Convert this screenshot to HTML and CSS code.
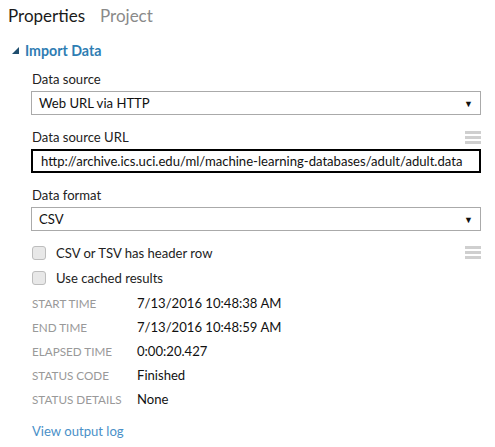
FILE: index.html
```html
<!DOCTYPE html>
<html>
<head>
<meta charset="utf-8">
<link rel="stylesheet" href="styles.css">
</head>
<body>
<div class="tabs">
  <span class="tab active">Properties</span>
  <span class="tab">Project</span>
</div>
<div class="section-head">
  <svg class="tri" width="7" height="7" viewBox="0 0 7 7"><polygon points="7,0 7,7 0,7" fill="#1f4e6e"/></svg>
  <span>Import Data</span>
</div>
<div class="panel">
  <div class="label-row"><span>Data source</span></div>
  <div class="select"><span>Web URL via HTTP</span><span class="arrow">▼</span></div>
  <div class="label-row"><span>Data source URL</span><span class="menu"><i></i><i></i><i></i></span></div>
  <div class="input">http://archive.ics.uci.edu/ml/machine-learning-databases/adult/adult.data</div>
  <div class="label-row"><span>Data format</span></div>
  <div class="select"><span>CSV</span><span class="arrow">▼</span></div>
  <div class="check-row first"><span class="box"></span><span class="ctext">CSV or TSV has header row</span><span class="menu"><i></i><i></i><i></i></span></div>
  <div class="check-row"><span class="box"></span><span class="ctext">Use cached results</span></div>
  <div class="stats">
    <div class="stat"><span class="k">START TIME</span><span class="v">7/13/2016 10:48:38 AM</span></div>
    <div class="stat"><span class="k">END TIME</span><span class="v">7/13/2016 10:48:59 AM</span></div>
    <div class="stat"><span class="k">ELAPSED TIME</span><span class="v">0:00:20.427</span></div>
    <div class="stat"><span class="k">STATUS CODE</span><span class="v">Finished</span></div>
    <div class="stat"><span class="k">STATUS DETAILS</span><span class="v">None</span></div>
  </div>
  <a class="log" href="#">View output log</a>
</div>
</body>
</html>
```
FILE: styles.css
```css
html, body {
  margin: 0;
  padding: 0;
  background: #fff;
}
body {
  font-family: "Lato", "Open Sans", sans-serif;
  font-size: 13.1px;
  color: #222;
  width: 495px;
  height: 447px;
  overflow: hidden;
}
.tabs {
  display: flex;
  gap: 15px;
  padding-left: 8px;
  height: 30px;
  align-items: center;
}
.tab {
  font-size: 17px;
  color: #8a8a8a;
}
.tab.active {
  color: #1a1a1a;
}
.section-head {
  display: flex;
  align-items: center;
  gap: 6px;
  padding-left: 12px;
  height: 20px;
  margin-top: 10px;
  color: #2e7db3;
  font-size: 14.2px;
  font-weight: 700;
}
.tri {
  display: block;
}
.panel {
  padding-left: 31px;
  padding-right: 14px;
}
.label-row {
  display: flex;
  justify-content: space-between;
  align-items: center;
  height: 24px;
  padding-left: 1px;
  margin-top: 10px;
}
.label-row:first-child {
  margin-top: 7px;
}
.select {
  display: flex;
  justify-content: space-between;
  align-items: center;
  height: 24px;
  box-sizing: border-box;
  border: 1px solid #aaa;
  padding: 0 7px 0 7px;
  color: #111;
}
.arrow {
  font-size: 9px;
  color: #111;
}
.menu {
  display: flex;
  flex-direction: column;
  gap: 2px;
  width: 16px;
}
.menu i {
  display: block;
  height: 3px;
  background: #cfcfcf;
}
.input {
  height: 24px;
  box-sizing: border-box;
  border: 2px solid #000;
  padding: 0 0 0 8px;
  display: flex;
  align-items: center;
  color: #111;
  white-space: nowrap;
  overflow: hidden;
}
.check-row {
  display: flex;
  align-items: center;
  height: 25px;
  padding-left: 1px;
}
.check-row.first {
  margin-top: 9px;
}
.box {
  width: 12px;
  height: 12px;
  border: 1px solid #bdbdbd;
  border-radius: 3px;
  background: #e8e8e8;
  margin-right: 10px;
}
.ctext {
  flex: 1;
}
.stats {
  padding-left: 1px;
  margin-top: 1px;
}
.stat {
  display: flex;
  align-items: center;
  height: 24px;
}
.k {
  width: 105px;
  color: #999;
  font-size: 11.7px;
}
.v {
  color: #111;
}
.log {
  display: block;
  margin-top: 10px;
  padding-left: 1px;
  color: #4a90c8;
  text-decoration: none;
  line-height: 20px;
}
```
